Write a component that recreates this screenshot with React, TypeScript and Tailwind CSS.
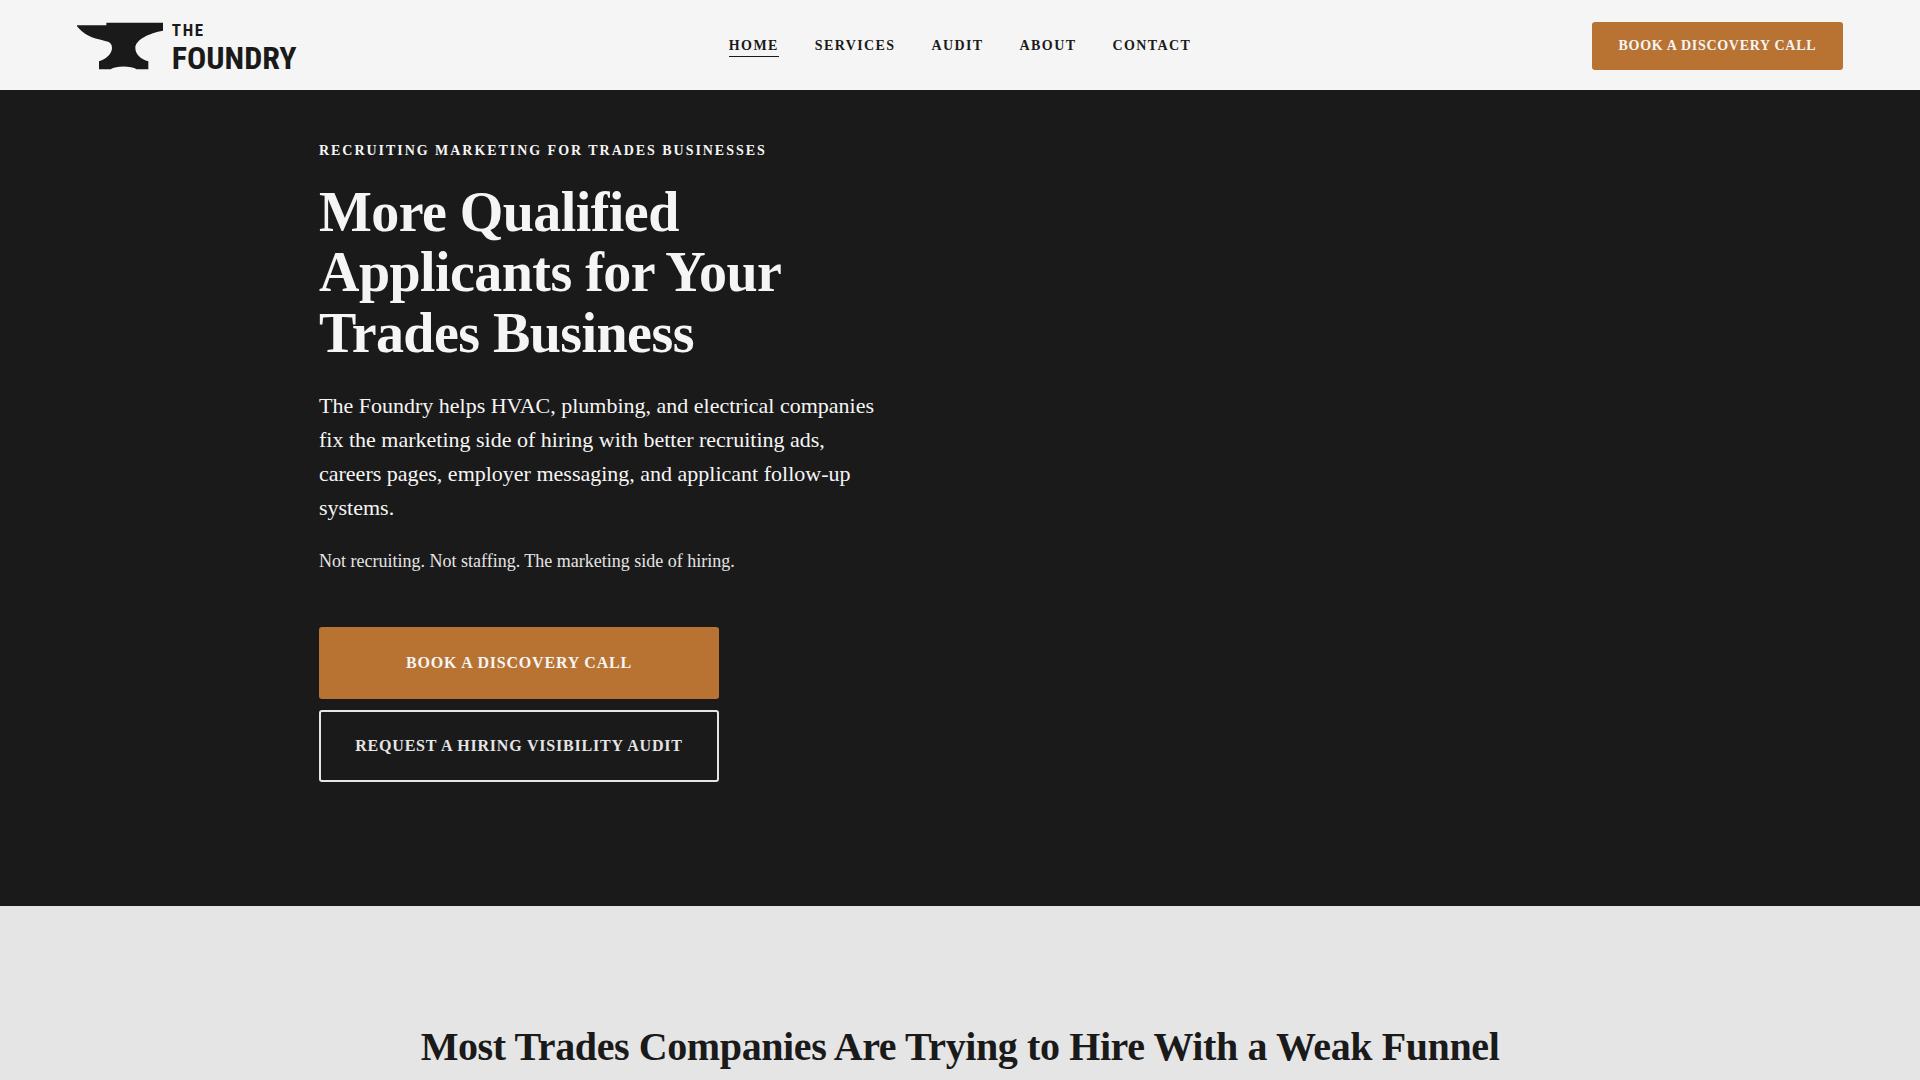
const navLinks = [
  { label: "Home", href: "#home", active: true },
  { label: "Services", href: "#services", active: false },
  { label: "Audit", href: "#audit", active: false },
  { label: "About", href: "#about", active: false },
  { label: "Contact", href: "#contact", active: false },
];

function Logo() {
  return (
    <a href="#home" className="flex h-12 items-start gap-[9px] justify-self-start text-[#1a1a1a]">
      {/* Anvil */}
      <svg viewBox="51 66 258 142" className="h-12 w-[86px]" fill="currentColor" aria-hidden="true">
        <path d="M51 75H139V67H309V91C268 98 226 118 226 143C226 162 243 177 265 183V207H230C213 196 168 196 152 207H117V183C140 175 156 160 156 143C156 127 146 124 133 121C95 114 70 102 51 78Z" />
      </svg>
      <span className="flex flex-col font-['Roboto_Condensed','Liberation_Sans_Narrow','Liberation_Sans',sans-serif] font-bold uppercase">
        <span className="text-[17px] leading-4 tracking-widest">The</span>
        <span className="text-[32px] leading-10">Foundry</span>
      </span>
    </a>
  );
}

function Header() {
  return (
    <header className="grid grid-cols-[1fr_auto_1fr] items-center gap-8 bg-[#f5f5f5] px-[4vw] pt-[22px] pb-5">
      <Logo />
      <nav className="flex items-center gap-9" aria-label="Main">
        {navLinks.map((link) => (
          <a
            key={link.label}
            href={link.href}
            aria-current={link.active ? "page" : undefined}
            className={
              link.active
                ? "border-b border-[#1a1a1a] text-sm leading-5 font-bold tracking-[0.1em] uppercase"
                : "border-b border-transparent text-sm leading-5 font-bold tracking-[0.1em] uppercase"
            }
          >
            {link.label}
          </a>
        ))}
      </nav>
      <a
        href="#book"
        className="justify-self-end rounded-[3px] bg-[#b87333] px-[27px] py-3.5 text-sm leading-5 font-bold tracking-[0.05em] text-[#f5f5f5] uppercase"
      >
        Book a Discovery Call
      </a>
    </header>
  );
}

function Hero() {
  return (
    <section id="home" className="bg-[#1a1a1a] px-[4vw] pt-12 pb-[124px] text-[#f5f5f5]">
      <div className="mx-auto max-w-[1282px]">
        <div className="max-w-[568px]">
          <p className="text-sm leading-[26px] font-bold tracking-[0.14em] uppercase">
            Recruiting Marketing for Trades Businesses
          </p>
          <h1 className="mt-[18px] text-[56px] leading-[1.08] font-bold tracking-[-0.01em]">
            More Qualified Applicants for Your Trades Business
          </h1>
          <p className="mt-[26px] text-[22px] leading-[34px]">
            The Foundry helps HVAC, plumbing, and electrical companies fix the marketing side of
            hiring with better recruiting ads, careers pages, employer messaging, and applicant
            follow-up systems.
          </p>
          <p className="mt-[22px] text-lg leading-7 text-[#e5e5e5]">
            Not recruiting. Not staffing. The marketing side of hiring.
          </p>
        </div>
        <div className="mt-[52px] flex max-w-[400px] flex-col gap-[11px] text-center text-base leading-6 font-bold tracking-[0.05em] uppercase">
          <a href="#book" className="rounded-[3px] bg-[#b87333] px-8 py-6">
            Book a Discovery Call
          </a>
          <a
            href="#audit"
            className="rounded-[3px] border-2 border-[#e5e5e5] px-8 py-[22px] text-[#e5e5e5]"
          >
            Request a Hiring Visibility Audit
          </a>
        </div>
      </div>
    </section>
  );
}

function Problem() {
  return (
    <section id="services" className="px-[4vw] pt-[117px]">
      <h2 className="text-center text-[40px] leading-[48px] font-bold tracking-[-0.01em]">
        Most Trades Companies Are Trying to Hire With a Weak Funnel
      </h2>
    </section>
  );
}

export default function App() {
  return (
    <div className="min-h-screen bg-[#e5e5e5] font-['Liberation_Serif',serif] text-[#1a1a1a]">
      <Header />
      <main>
        <Hero />
        <Problem />
      </main>
    </div>
  );
}
